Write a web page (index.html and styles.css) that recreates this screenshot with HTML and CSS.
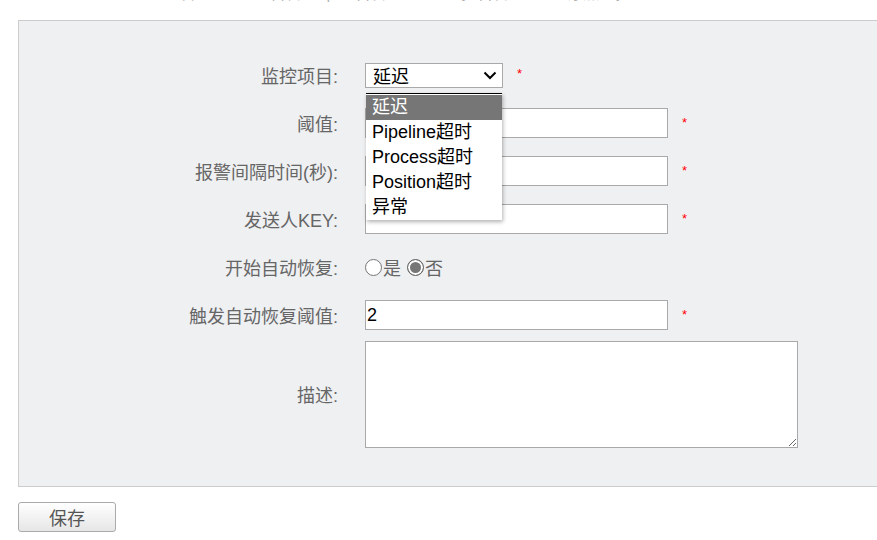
FILE: index.html
```html
<!DOCTYPE html>
<html>
<head>
<meta charset="utf-8">
<link rel="stylesheet" href="styles.css">
</head>
<body>
<div class="crumb"><span class="crumb-text">Canal &gt; Channel管理 &gt; 告警 | 告警 &gt; 监控告警 &gt; 添加监控</span></div>
<div class="panel">
  <div class="form">
    <div class="label">监控项目:</div>
    <div class="ctrl">
      <div class="select-wrap">
        <div class="select"><span>延迟</span>
          <svg class="chev" width="14" height="9" viewBox="0 0 14 9"><path d="M1.5 1.5 L7 7 L12.5 1.5" fill="none" stroke="#000" stroke-width="2"/></svg>
        </div>
        <div class="popup">
          <div class="opt active">延迟</div>
          <div class="opt">Pipeline超时</div>
          <div class="opt">Process超时</div>
          <div class="opt">Position超时</div>
          <div class="opt">异常</div>
        </div>
      </div>
      <span class="star">*</span>
    </div>

    <div class="label">阈值:</div>
    <div class="ctrl"><input class="text" type="text"><span class="star">*</span></div>

    <div class="label">报警间隔时间(秒):</div>
    <div class="ctrl"><input class="text" type="text"><span class="star">*</span></div>

    <div class="label">发送人KEY:</div>
    <div class="ctrl"><input class="text" type="text"><span class="star">*</span></div>

    <div class="label">开始自动恢复:</div>
    <div class="ctrl radios">
      <label class="radio"><span class="dot"></span>是</label>
      <label class="radio"><span class="dot on"></span>否</label>
    </div>

    <div class="label">触发自动恢复阈值:</div>
    <div class="ctrl"><input class="text" type="text" value="2"><span class="star">*</span></div>

    <div class="label tall">描述:</div>
    <div class="ctrl tall"><textarea class="area"></textarea></div>
  </div>
</div>
<button class="save">保存</button>
</body>
</html>
```
FILE: styles.css
```css
html, body {
  margin: 0;
  padding: 0;
  background: #fff;
  overflow: hidden;
  font-family: "Liberation Sans", "Noto Sans CJK SC", sans-serif;
}
.crumb {
  height: 20px;
  overflow: hidden;
  padding-left: 20px;
}
.crumb-text {
  display: block;
  margin-top: -14px;
  font-size: 16px;
  line-height: 16px;
  color: #b0b0b0;
  word-spacing: 20px;
  white-space: nowrap;
}
.panel {
  margin-left: 18px;
  width: 900px;
  border: 1px solid #ccc;
  background: #eff0f2;
  padding: 30px 0 36px 0;
  box-sizing: border-box;
  height: 467px;
}
.form {
  display: grid;
  grid-template-columns: 319px 1fr;
  column-gap: 27px;
  grid-auto-rows: 48px;
}
.label {
  font-size: 18px;
  color: #666;
  text-align: right;
  display: flex;
  align-items: center;
  justify-content: flex-end;
}
.ctrl {
  display: flex;
  align-items: center;
}
.label.tall, .ctrl.tall {
  height: 110px;
}
.select-wrap {
  position: relative;
}
.select {
  width: 138px;
  height: 25px;
  box-sizing: border-box;
  border: 1px solid #a9a9a9;
  background: #fff;
  display: flex;
  align-items: center;
  justify-content: space-between;
  padding: 0 5px 0 7px;
  font-size: 18px;
  color: #000;
}
.chev {
  display: block;
}
.popup {
  position: absolute;
  left: 1px;
  top: 30px;
  width: 136px;
  background: #fff;
  border-top: 1px solid #000;
  padding-top: 1px;
  box-shadow: 1px 2px 4px rgba(0,0,0,0.3);
  z-index: 5;
}
.opt {
  height: 25px;
  line-height: 25px;
  font-size: 18px;
  padding-left: 6px;
  color: #000;
  white-space: nowrap;
}
.opt.active {
  background: #767676;
  color: #fff;
}
.star {
  color: #f00;
  font-size: 13px;
  margin-left: 14px;
  align-self: flex-start;
  margin-top: 16px;
}
.select-wrap + .star {
  margin-top: 15px;
}
.text {
  width: 303px;
  height: 30px;
  box-sizing: border-box;
  border: 1px solid #a9a9a9;
  background: #fff;
  font-size: 18px;
  padding: 0 1px;
  font-family: "Liberation Sans", "Noto Sans CJK SC", sans-serif;
  color: #000;
  outline: none;
}
.radios {
  font-size: 18px;
  color: #666;
  gap: 6px;
}
.radio {
  display: flex;
  align-items: center;
}
.dot {
  width: 15px;
  height: 15px;
  border: 1px solid #767676;
  border-radius: 50%;
  background: #fff;
  margin-right: 1px;
  box-sizing: content-box;
}
.dot.on {
  background: #767676;
  box-shadow: inset 0 0 0 2px #fff;
  border-color: #666;
}
.area {
  width: 433px;
  height: 107px;
  box-sizing: border-box;
  border: 1px solid #a9a9a9;
  background: #fff;
  resize: both;
  margin: 0;
}
.save {
  display: block;
  margin: 15px 0 0 18px;
  width: 98px;
  height: 30px;
  border: 1px solid #aaa;
  border-radius: 3px;
  background: linear-gradient(#fff, #e6e6e6);
  font-size: 18px;
  color: #555;
  font-family: "Liberation Sans", "Noto Sans CJK SC", sans-serif;
  padding: 0;
}
```
